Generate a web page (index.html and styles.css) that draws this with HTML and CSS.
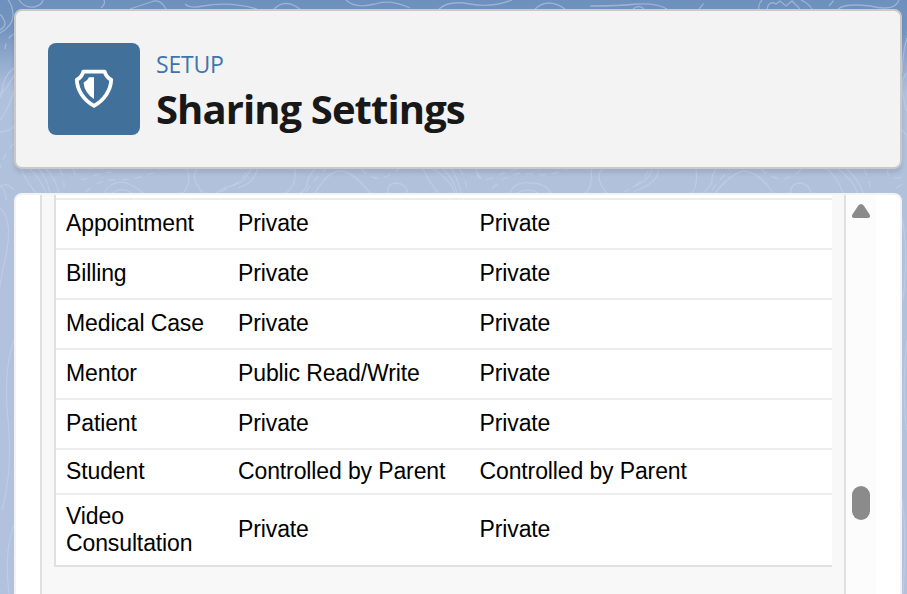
FILE: index.html
```html
<!DOCTYPE html>
<html lang="en">
<head>
<meta charset="utf-8">
<title>Sharing Settings</title>
<link rel="stylesheet" href="styles.css">
</head>
<body>
<svg class="contours" viewBox="0 0 907 594" aria-hidden="true">
  <path d="M0 30Q7 26 4 20Q1 14 0 15M0 33Q14 25 13 14Q12 4 8 0M19 0Q24 8 34 7Q42 5 43 0M101 8Q106 4 104 0M130 9Q142 5 151 2Q160-2 166 9M185 4Q190 9 203 6Q230 1 257 9M274 9Q285-2 300 9M346 0Q355 9 375 4Q390-1 410 8M439 9Q449 0 470 4T512 0M535 9Q548-3 565 9M590 6Q620 6 637 4Q657 3 667 9M633 9Q639 4 644 9M759 9Q758 4 762 0M767 9Q769 0 776 4L780 1L786 6L792 1L800 9M812 9Q808 3 801 0M838 9Q845 3 870 6Q895 12 899 0"/>
  <path d="M14 68Q3 76 2 91L0 98M14 75Q10 84 0 95M14 91Q9 108 0 120M14 126Q9 132 0 132M0 185Q6 190 6 200M14 190Q5 181 0 187M0 208Q14 220 5 260T0 310M14 340Q3 370 8 420T2 510M14 525Q4 550 9 594"/>
  <path d="M21 169Q25 179 36 193M30 169Q40 178 46 193M39 169Q47 178 50 193M46 169Q55 177 59 193M104 193Q112 179 127 183Q138 188 143 193M112 193Q122 186 132 193M187 169Q192 183 183 193M197 169Q190 178 203 193M251 169Q245 182 234 185T216 193M257 169Q255 183 238 188M295 169Q297 185 286 193M315 169Q306 179 307 185Q304 192 300 193M315 193Q327 172 340 171Q354 172 370 193M388 193Q387 183 397 183Q406 184 408 193M423 169Q428 180 438 193M433 169Q449 178 455 193M443 169Q454 179 457 193M452 169Q458 180 461 193M476 169Q477 177 481 179M510 193Q515 181 530 183Q546 183 551 193M517 193Q529 187 538 193M591 169Q593 188 585 193M602 169Q594 178 607 193M658 169Q660 182 633 192M652 169Q650 181 632 187M696 169Q698 186 692 193M716 169Q711 176 712 183Q707 190 703 193M715 193Q732 172 745 171Q760 173 773 193M791 193Q790 183 801 183Q810 185 811 193M827 169Q838 178 843 193M838 169Q855 182 857 193M847 169Q859 180 863 193"/>
  <path d="M907 38Q903 50 902 73M907 73Q900 78 903 95T907 110M902 130L907 136M902 220Q909 250 903 300M907 340Q902 380 906 430M902 500Q907 530 903 594"/>
  <path class="dashed" d="M14 34Q6 38 5 49M14 143Q2 157 0 169M60 169Q66 182 63 193M73 169Q77 183 88 178T111 172M86 192Q96 181 113 180Q141 180 161 169M221 192Q242 183 248 169M306 192Q316 177 326 169M361 169Q374 181 383 178T399 169M460 169Q466 180 468 193M477 172Q481 184 495 177T519 169M492 189Q507 173 523 173Q549 178 567 169M624 192Q644 183 649 169M712 190Q721 178 730 169M761 169Q774 180 783 179T802 169M864 169Q871 181 870 193M888 169Q885 182 907 176M896 188L907 182M699 9L705 2M829 6L834 0"/>
</svg>
<div class="page">
  <header class="setup-header">
    <div class="setup-icon">
      <svg viewBox="0 0 92 92" aria-hidden="true">
        <path class="shield" d="M35.4 28.6H56.6Q58.2 34.4 63.2 36.8C62.8 47 56.5 57 46 62.8C35.5 57 29.2 47 28.8 36.8Q33.8 34.4 35.4 28.6Z"/>
        <path class="shield-half" d="M46 34.3H41Q39.3 38 35.5 39.8Q36.5 50 46 56Z"/>
      </svg>
    </div>
    <div class="heading">
      <p class="eyebrow">SETUP</p>
      <h1 class="title">Sharing Settings</h1>
    </div>
  </header>
  <main class="content">
    <section class="panel">
      <table class="sharing">
        <colgroup><col class="object"><col class="internal"><col class="external"></colgroup>
        <tbody>
          <tr><td>Appointment</td><td>Private</td><td>Private</td></tr>
          <tr><td>Billing</td><td>Private</td><td>Private</td></tr>
          <tr><td>Medical Case</td><td>Private</td><td>Private</td></tr>
          <tr><td>Mentor</td><td>Public Read/Write</td><td>Private</td></tr>
          <tr><td>Patient</td><td>Private</td><td>Private</td></tr>
          <tr class="compact"><td>Student</td><td>Controlled by Parent</td><td>Controlled by Parent</td></tr>
          <tr class="tall"><td>Video Consultation</td><td>Private</td><td>Private</td></tr>
        </tbody>
      </table>
    </section>
    <div class="scrollbar">
      <svg class="arrow" viewBox="0 0 18 14" aria-hidden="true"><path d="M6.3 1.6Q9-1.4 11.7 1.6L17.6 10.6Q19 14 16 14H2Q-1 14 .4 10.6Z"/></svg>
      <div class="thumb"></div>
    </div>
  </main>
</div>
</body>
</html>
```

FILE: styles.css
```css
* { box-sizing: border-box; }

body {
  margin: 0;
  height: 594px;
  overflow: hidden;
  background: linear-gradient(#6d90bc 0, #7595c0 30px, #b0c1dc 92px, #b2c2dc 100%);
  font-family: "Liberation Sans", Arial, sans-serif;
}

.contours {
  position: absolute;
  inset: 0;
  width: 907px;
  height: 594px;
  fill: none;
  stroke: #c9d5f0;
  stroke-opacity: .5;
  stroke-width: 1.3;
}

.dashed { stroke-dasharray: 7 6; }

.page {
  position: relative;
  height: 594px;
  padding: 9px 5px 0 14px;
  display: flex;
  flex-direction: column;
  gap: 24px;
}

.setup-header {
  flex: none;
  height: 160px;
  padding: 32px;
  display: flex;
  gap: 16px;
  background: #f3f3f3;
  border: 2px solid #c9c9c9;
  border-radius: 8px;
  box-shadow: 0 4px 4px rgba(0, 0, 0, .1);
}

.setup-icon {
  width: 92px;
  height: 92px;
  border-radius: 8px;
  background: #41719b;
}

.setup-icon svg { display: block; }
.shield { fill: none; stroke: #fff; stroke-width: 3.8; stroke-linejoin: round; }
.shield-half { fill: #fff; }

.heading {
  padding-top: 5px;
  font-family: "Open Sans", "Noto Sans", sans-serif;
  white-space: nowrap;
}

.eyebrow {
  margin: 0;
  color: #3f74ae;
  font-size: 23px;
  line-height: 32px;
  letter-spacing: -.2px;
}

.title {
  margin: 0;
  color: #181818;
  font-size: 40px;
  line-height: 58px;
  font-weight: 700;
  letter-spacing: -.92px;
}

.content {
  flex: 1;
  display: flex;
  padding-left: 24px;
  background: #fff;
  border: 2px solid #f3f3f3;
  border-bottom: 0;
  border-radius: 8px 8px 0 0;
}

.panel {
  width: 806px;
  padding: 3px 12px 0;
  background: linear-gradient(90deg, transparent 12px, #e0e0e0 12px, #e0e0e0 14px, #fff 14px, #fff 790px, transparent 790px) 0 0 / 100% 3px no-repeat, #f8f8f8;
  border: solid #e0e0e0;
  border-width: 0 2px;
}

.sharing {
  width: 778px;
  table-layout: fixed;
  border-collapse: separate;
  border-spacing: 0;
  background: #fff;
  border-left: 2px solid #e0e0e0;
  border-bottom: 2px solid #e0e0e0;
  color: #000;
  font-size: 23px;
  line-height: 27px;
  letter-spacing: -.12px;
}

.object { width: 172px; }
.internal { width: 241.5px; }

.sharing td {
  height: 50px;
  padding: 0 10px 2px;
  border-top: 2px solid #ececec;
  vertical-align: middle;
}

.sharing .compact td { height: 45px; padding-bottom: 0; }
.sharing .tall td { height: 72px; }
.sharing .tall td:first-child { padding-bottom: 0; }

.scrollbar {
  width: 30px;
  padding: 9px 6px 0;
  background: #fcfcfc;
}

.arrow {
  display: block;
  width: 18px;
  height: 14px;
  fill: #8b8b8b;
}

.thumb {
  height: 34px;
  margin-top: 268px;
  border-radius: 9px;
  background: #8b8b8b;
}
```
